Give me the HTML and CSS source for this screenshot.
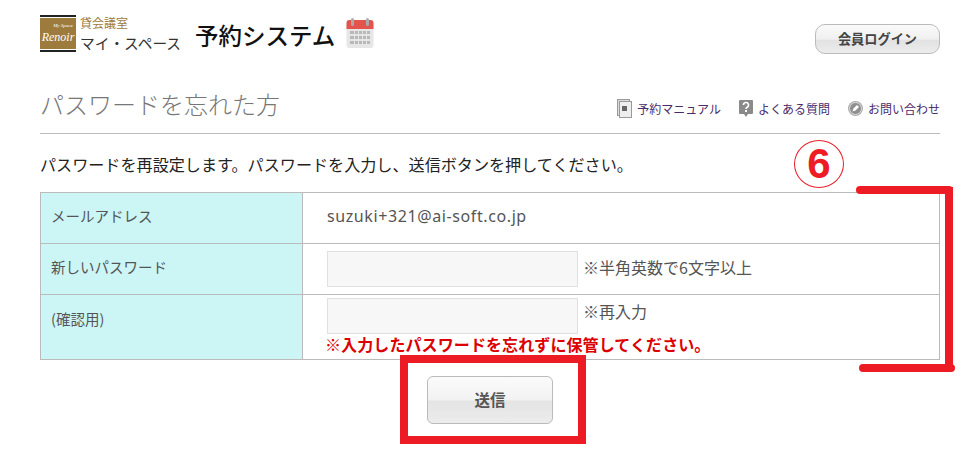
FILE: index.html
```html
<!DOCTYPE html>
<html lang="ja">

<head>
  <meta charset="UTF-8" />
  <title>パスワードを忘れた方</title>
  <link rel="stylesheet" href="styles.css">
</head>

<body>
  <div class="page">
    <header class="site-header">
      <a href="#" class="brand">
        <span class="brand-mark">
          <span class="brand-inner">
            <span class="brand-small">My Space</span>
            <span class="brand-script">Renoir</span>
          </span>
        </span>
        <span class="brand-text">
          <span class="brand-sub">貸会議室</span>
          <span class="brand-name">マイ・スペース</span>
        </span>
      </a>
      <span class="system-title">予約システム</span>
      <svg class="calendar-icon" width="28" height="32" viewBox="0 0 28 32">
        <rect x="0.500" y="3" width="27" height="28" rx="3" fill="#e6e6e6" />
        <path d="M0.500 12V6a3 3 0 0 1 3-3h21a3 3 0 0 1 3 3v6z" fill="#e2544c" />
        <rect x="5" y="1" width="3" height="8" rx="1.500" fill="#aaa" />
        <rect x="20" y="1" width="3" height="8" rx="1.500" fill="#aaa" />
        <path d="M4 14h20v3H4zM4 19h20v3H4zM4 24h20v3H4z" fill="#b8b8b8" />
        <path d="M8 14h1v13H8zM12 14h1v13h-1zM16 14h1v13h-1zM20 14h1v13h-1z" fill="#e6e6e6" />
      </svg>
      <button class="login-btn">会員ログイン</button>
    </header>

    <div class="title-row">
      <h1>パスワードを忘れた方</h1>
      <ul class="help-links">
        <li>
          <svg width="15" height="19" viewBox="0 0 15 19">
            <rect x="0.500" y="0.500" width="12" height="16" fill="#ddd" stroke="#999" />
            <rect x="2.500" y="2.500" width="12" height="16" fill="#eee" stroke="#999" />
            <rect x="5" y="7" width="5" height="5" fill="#666" />
          </svg>
          <a href="#">予約マニュアル</a>
        </li>
        <li>
          <svg width="14" height="17" viewBox="0 0 14 17">
            <path d="M1 0h12a1 1 0 0 1 1 1v12a1 1 0 0 1-1 1H9l-2 3-2-3H1a1 1 0 0 1-1-1V1a1 1 0 0 1 1-1z" fill="#8a8a8a" />
            <path d="M4.500 5a2.500 2.500 0 1 1 3.600 2.200C7.400 7.600 7 8 7 9" fill="none" stroke="#fff" stroke-width="1.600" />
            <rect x="6" y="10" width="2" height="2" fill="#fff" />
          </svg>
          <a href="#">よくある質問</a>
        </li>
        <li>
          <svg width="15" height="15" viewBox="0 0 15 15">
            <circle cx="7.500" cy="7.500" r="7.500" fill="#aaa" />
            <circle cx="7.500" cy="7.500" r="6" fill="#8f8f8f" stroke="#ddd" />
            <path d="M4.500 10.500l1-3 3.500-3.500 2 2-3.500 3.500z" fill="#fff" />
          </svg>
          <a href="#">お問い合わせ</a>
        </li>
      </ul>
    </div>

    <p class="lead">パスワードを再設定します。パスワードを入力し、送信ボタンを押してください。</p>

    <table class="form-table">
      <tr class="row-mail">
        <th>メールアドレス</th>
        <td class="mail-value">suzuki+321@ai-soft.co.jp</td>
      </tr>
      <tr class="row-new">
        <th>新しいパスワード</th>
        <td>
          <div class="field-line">
            <input type="password" class="text-input">
            <span class="note">※半角英数で6文字以上</span>
          </div>
        </td>
      </tr>
      <tr class="row-confirm">
        <th>(確認用)</th>
        <td>
          <div class="field-line">
            <input type="password" class="text-input">
            <span class="note">※再入力</span>
          </div>
          <p class="warning">※入力したパスワードを忘れずに保管してください。</p>
        </td>
      </tr>
    </table>

    <div class="submit-row">
      <button class="submit-btn">送信</button>
    </div>
  </div>

  <!-- red marks drawn over the screenshot -->
  <span class="mark-number">6</span>
  <span class="mark-bracket-top"></span>
  <span class="mark-bracket-side"></span>
  <span class="mark-bracket-bottom"></span>
  <span class="mark-box"></span>
</body>

</html>
```

FILE: styles.css
```css
* {
  margin: 0;
  border: 0;
  padding: 0;
  box-sizing: border-box;
}

html,
body {
  height: 453px;
  overflow: hidden;
}

body {
  font-family: "Noto Sans CJK JP", "Noto Sans", sans-serif;
  color: #333;
  background-color: white;
  position: relative;
}

.page {
  width: 900px;
  margin-left: 40px;
}

.site-header {
  display: flex;
  align-items: flex-start;
  height: 82px;
  padding-top: 15px;
}

.brand {
  display: flex;
  color: #333;
  text-decoration: none;
}

.brand-mark {
  display: block;
  width: 36px;
  height: 37px;
  padding: 1px 0;
  border-top: 2px solid #222;
  border-bottom: 2px solid #222;
}

.brand-inner {
  display: flex;
  flex-direction: column;
  align-items: center;
  height: 31px;
  background-color: #9c7b3c;
  color: white;
  overflow: hidden;
}

.brand-small {
  font-family: "Liberation Serif", serif;
  font-style: italic;
  font-size: 5px;
  line-height: 8px;
  margin-top: 4px;
  margin-left: 10px;
}

.brand-script {
  font-family: "Liberation Serif", serif;
  font-style: italic;
  font-size: 12px;
  line-height: 14px;
}

.brand-text {
  display: flex;
  flex-direction: column;
  margin-left: 4px;
}

.brand-sub {
  font-size: 12px;
  line-height: 14px;
  color: #9c7b3c;
  margin-top: 1px;
}

.brand-name {
  font-size: 14.700px;
  line-height: 20px;
  margin-top: 3px;
  color: #333;
}

.system-title {
  font-size: 23.500px;
  font-weight: 500;
  line-height: 32px;
  margin-left: 14px;
  margin-top: 4px;
  color: #111;
}

.calendar-icon {
  margin-left: 11px;
  margin-top: 2px;
}

.login-btn {
  margin-left: auto;
  margin-top: 9px;
  width: 125px;
  height: 30px;
  padding-bottom: 2px;
  font-family: inherit;
  font-size: 13.200px;
  font-weight: 700;
  color: #444;
  border: 1px solid #bbb;
  border-radius: 10px;
  background: linear-gradient(#fafafa, #f0f0f0 50%, #e2e2e2 55%, #ececec);
}

.title-row {
  display: flex;
  justify-content: space-between;
  align-items: center;
  height: 52px;
  border-bottom: 1px solid #bbb;
}

.title-row h1 {
  font-size: 24px;
  font-weight: 300;
  color: #777;
  line-height: 48px;
  margin-bottom: 8px;
}

.help-links {
  display: flex;
  gap: 18px;
  list-style: none;
  margin-top: 2px;
}

.help-links li {
  display: flex;
  align-items: center;
  gap: 5px;
}

.help-links a {
  font-size: 12px;
  color: #4a2a6a;
  text-decoration: none;
}

.lead {
  font-size: 16.100px;
  line-height: 20px;
  color: #222;
  margin-top: 20px;
  margin-bottom: 18px;
}

.form-table {
  width: 900px;
  table-layout: fixed;
  border-collapse: collapse;
  border: 1px solid #bbb;
}

.form-table th,
.form-table td {
  border: 1px solid #bbb;
  font-size: 14.500px;
  font-weight: 400;
  text-align: left;
}

.form-table th {
  width: 262px;
  padding-left: 10px;
  padding-bottom: 5px;
  background-color: #ccf6f5;
  color: #555;
}

.form-table td {
  padding-left: 24px;
}

.row-mail {
  height: 51px;
}

.row-new {
  height: 51px;
}

.row-confirm {
  height: 65px;
}

.row-confirm th {
  vertical-align: top;
  padding-top: 14px;
  line-height: 20px;
}

.row-confirm td {
  vertical-align: top;
  padding-top: 3px;
}

.form-table .mail-value {
  font-family: "Noto Sans", sans-serif;
  font-size: 16px;
  letter-spacing: 0.600px;
  padding-bottom: 4px;
  color: #555;
}

.field-line {
  display: flex;
  align-items: flex-start;
}

.text-input {
  width: 251px;
  height: 36px;
  background-color: #f7f7f7;
  border: 1px solid #e0e0e0;
}

.note {
  font-size: 16px;
  line-height: 26px;
  margin-left: 5px;
  color: #555;
}

.row-new .note {
  line-height: 32px;
}

.warning {
  font-size: 16px;
  font-weight: 700;
  line-height: 20px;
  color: #d00;
  white-space: nowrap;
  margin-left: -2px;
  letter-spacing: 0.100px;
}

.submit-row {
  display: flex;
  justify-content: center;
  margin-top: 16px;
}

.submit-btn {
  width: 126px;
  height: 48px;
  padding-bottom: 2px;
  font-family: inherit;
  font-size: 15.500px;
  font-weight: 700;
  color: #555;
  border: 1px solid #bbb;
  border-radius: 6px;
  background: linear-gradient(#fbfbfb, #f2f2f2 50%, #e4e4e4 52%, #ececec);
}

.mark-number {
  position: absolute;
  left: 794px;
  top: 140px;
  width: 50px;
  height: 48px;
  border: 1.500px solid #e8202a;
  border-radius: 50%;
  font-family: "Liberation Sans", sans-serif;
  font-size: 42px;
  line-height: 46px;
  font-weight: 700;
  text-align: center;
  color: #ed1c24;
}

.mark-bracket-top {
  position: absolute;
  left: 856px;
  top: 186px;
  width: 97px;
  height: 8px;
  border-radius: 4px;
  background-color: #ed1c24;
}

.mark-bracket-side {
  position: absolute;
  left: 945px;
  top: 187px;
  width: 8px;
  height: 184px;
  background-color: #ed1c24;
}

.mark-bracket-bottom {
  position: absolute;
  left: 859px;
  top: 364px;
  width: 96px;
  height: 8px;
  border-radius: 4px;
  background-color: #ed1c24;
}

.mark-box {
  position: absolute;
  left: 400px;
  top: 355px;
  width: 186px;
  height: 89px;
  border: 8px solid #ed1c24;
}
```
